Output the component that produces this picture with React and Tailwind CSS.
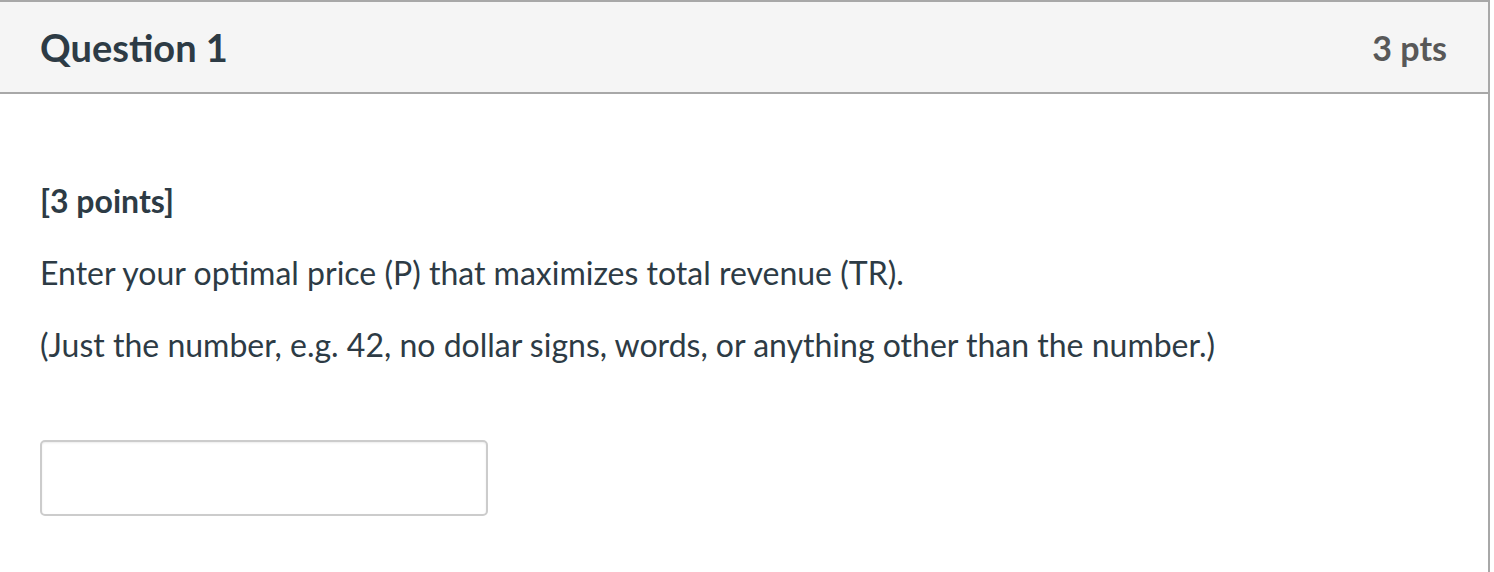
import React from "react";

const QuestionCard = ({ number, points, children }) => {
  return (
    <div className="w-[1490px] border-t-2 border-r-2 border-[#a8a8a8] bg-white">
      <div className="flex h-[92px] items-center justify-between border-b-2 border-[#a8a8a8] bg-[#f5f5f5] pl-[40px] pr-[41px]">
        <h2 className="text-[38px] font-bold text-[#2d3b45]">Question {number}</h2>
        <span className="text-[34px] font-bold text-[#585858]">{points} pts</span>
      </div>
      <div className="px-[40px] pt-[86px] pb-[56px] text-[32px] leading-[42px] text-[#2d3b45]">
        {children}
      </div>
    </div>
  );
};

export default function App() {
  return (
    <div className="h-[572px] bg-white font-['Lato',sans-serif]">
      <QuestionCard number={1} points={3}>
        <p className="font-bold">[3 points]</p>
        <p className="mt-[30px]">Enter your optimal price (P) that maximizes total revenue (TR).</p>
        <p className="mt-[30px]">
          (Just the number, e.g. 42, no dollar signs, words, or anything other than the number.)
        </p>
        <input
          type="text"
          className="mt-[74px] block h-[76px] w-[448px] rounded-[5px] border-2 border-[#cccccc] bg-white px-3 text-[28px] shadow-[inset_0_1px_2px_rgba(0,0,0,0.08)] outline-none"
        />
      </QuestionCard>
    </div>
  );
}
